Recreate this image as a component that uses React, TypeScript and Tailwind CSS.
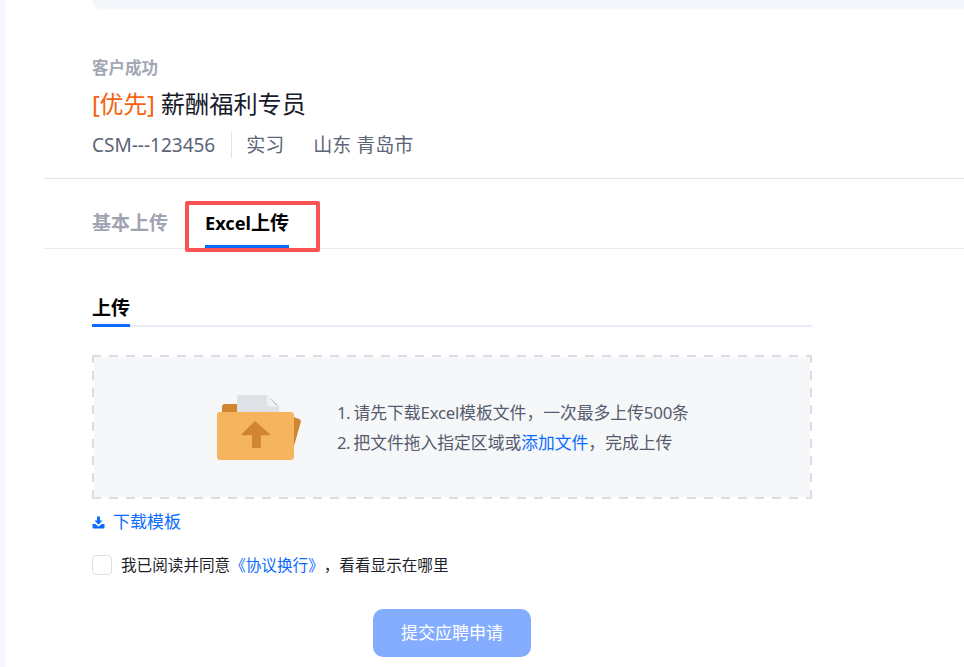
const FONT = "font-['Noto_Sans','Noto_Sans_CJK_SC',sans-serif]";

function FolderArt() {
  return (
    <svg width="84" height="67" viewBox="0 0 84 67" className="block">
      {/* back tab + rear sheet */}
      <path d="M5 13a3 3 0 0 1 3-3h12v10H5z" fill="#d08530" />
      <path d="M77 23l5 2a2.500 2.500 0 0 1 1.700 3.200L77 52z" fill="#d08530" />
      {/* paper */}
      <path d="M20 3a2 2 0 0 1 2-2h28l12 12v6H20z" fill="#dfe1e6" />
      <path d="M50 1l12 12-10-1a2 2 0 0 1-2-2z" fill="#f1f2f4" />
      <path d="M51 1.500l11 11.500v-1l-3-1z" fill="#9aa3b2" />
      {/* front */}
      <rect x="0" y="18" width="77" height="48" rx="3" fill="#f5b55f" />
      <path d="M38 27l14.500 12.800a.8 .8 0 0 1-.500 1.400h-8v11.300a1.500 1.500 0 0 1-1.500 1.500h-6a1.500 1.500 0 0 1-1.500-1.500V41.200h-9.500a.8 .8 0 0 1-.500-1.400z" fill="#d08530" />
    </svg>
  );
}

function DownloadIcon() {
  return (
    <svg width="13" height="13" viewBox="0 0 13 13" className="block" fill="#0a6cff">
      <path d="M5 0.500h3v4h2.500L6.500 8.800 2.500 4.500H5z" />
      <path d="M0.500 8h2.600l3.400 2.600L9.900 8h2.600v3.500a1 1 0 0 1-1 1h-10a1 1 0 0 1-1-1z" />
    </svg>
  );
}

export default function App() {
  return (
    <div className={`${FONT} relative h-[667px] w-[964px] overflow-hidden bg-white [text-spacing-trim:space-all]`}>
      {/* HIGHLIGHT */}
      <div className="absolute left-[185px] top-[201px] h-[51px] w-[135px] rounded-[2px] border-4 border-[#f95353]" />

      <div className="flex h-full">
        <div className="h-full w-[6px] shrink-0 bg-[#f5f7fc]" />

        <div className="min-w-0 flex-1 pl-[38px]">
          {/* TOP CARD */}
          <div className="ml-[48px] h-[9px] rounded-bl-[10px] bg-[#f5f7fc]" />

          {/* JOB HEADER */}
          <div className="h-[170px] border-b border-[#e3e4ea] pl-[48px] pt-[49px]">
            <div className="text-[16.500px] font-bold leading-5 text-[#a3a7b2]">客户成功</div>
            <div className="mt-[10px] text-[24px] leading-[32px] text-[#171a2b]">
              <span className="tracking-[-0.300px] text-[#f5620f]">[优先]</span>{" "}
              <span className="text-[24.200px]">薪酬福利专员</span>
            </div>
            <div className="mt-[12px] flex h-[26px] items-center text-[19px] text-[#5c6478]">
              <span>CSM---123456</span>
              <span className="ml-[16px] mr-[14px] h-[26px] w-px bg-[#e3e4ea]" />
              <span>实习</span>
              <span className="ml-[29px]">山东 青岛市</span>
            </div>
          </div>

          {/* TABS */}
          <div className="flex h-[70px] border-b border-[#e9eaf2] pl-[48px]">
            <div className="pt-[30px] text-[19px] font-bold leading-[28px] text-[#a0a3b1]">基本上传</div>
            <div className="ml-[37px] h-[69px] border-b-[3px] border-[#0a6cff] pt-[30px] text-[19px] font-bold leading-[28px] text-black">
              <span className="text-[18.200px]">Excel</span>上传
            </div>
          </div>

          {/* UPLOAD */}
          <div className="w-[768px] pl-[48px]">
            <div className="mt-[46px] border-b-2 border-[#e9ecf8]">
              <div className="-mb-[2px] w-[38px] border-b-[3px] border-[#0a6cff] pb-[3px] text-[19px] font-bold leading-[26px] text-black">
                上传
              </div>
            </div>

            {/* long dashes, the stock dashed border is too short */}
            <div className="mt-[28px] h-[144px] p-[2px] [background:repeating-linear-gradient(90deg,#dadce6_0_9px,transparent_9px_17px)_0_0/100%_2px_no-repeat,repeating-linear-gradient(90deg,#dadce6_0_9px,transparent_9px_17px)_0_100%/100%_2px_no-repeat,repeating-linear-gradient(0deg,#dadce6_0_9px,transparent_9px_17px)_0_0/2px_100%_no-repeat,repeating-linear-gradient(0deg,#dadce6_0_9px,transparent_9px_17px)_100%_0/2px_100%_no-repeat]">
              <div className="flex h-full items-center bg-[#f6f7f9] pl-[123px]">
                <FolderArt />
                <div className="ml-[36px] pt-[2px] text-[16.800px] leading-[30px] text-[#565c6e]">
                  <div>
                    <span className="tracking-[-0.700px]">1. </span>请先下载
                    <span className="tracking-[-0.200px]">Excel</span>模板文件，一次最多上传
                    <span className="tracking-[-0.200px]">500</span>条
                  </div>
                  <div>
                    <span className="tracking-[-0.700px]">2. </span>把文件拖入指定区域或
                    <span className="text-[#0a6cff]">添加文件</span>，完成上传
                  </div>
                </div>
              </div>
            </div>

            <div className="mt-[11px] flex h-[24px] items-center gap-[8px] text-[17px] text-[#0a6cff]">
              <DownloadIcon />
              <span>下载模板</span>
            </div>

            <div className="mt-[20px] flex h-[22px] items-center text-[15.600px] text-[#1c1f2b]">
              <span className="h-[20px] w-[20px] rounded-[4px] border border-[#dcdfe9] bg-white" />
              <span className="ml-[9px] pt-[1px]">
                我已阅读并同意<span className="text-[#0a6cff]">《协议换行》</span>，看看显示在哪里
              </span>
            </div>

            <div className="mt-[33px] flex justify-center">
              <button className="h-[48px] w-[158px] rounded-[10px] bg-[#84adff] text-[17px] text-white">
                提交应聘申请
              </button>
            </div>
          </div>
        </div>
      </div>
    </div>
  );
}
